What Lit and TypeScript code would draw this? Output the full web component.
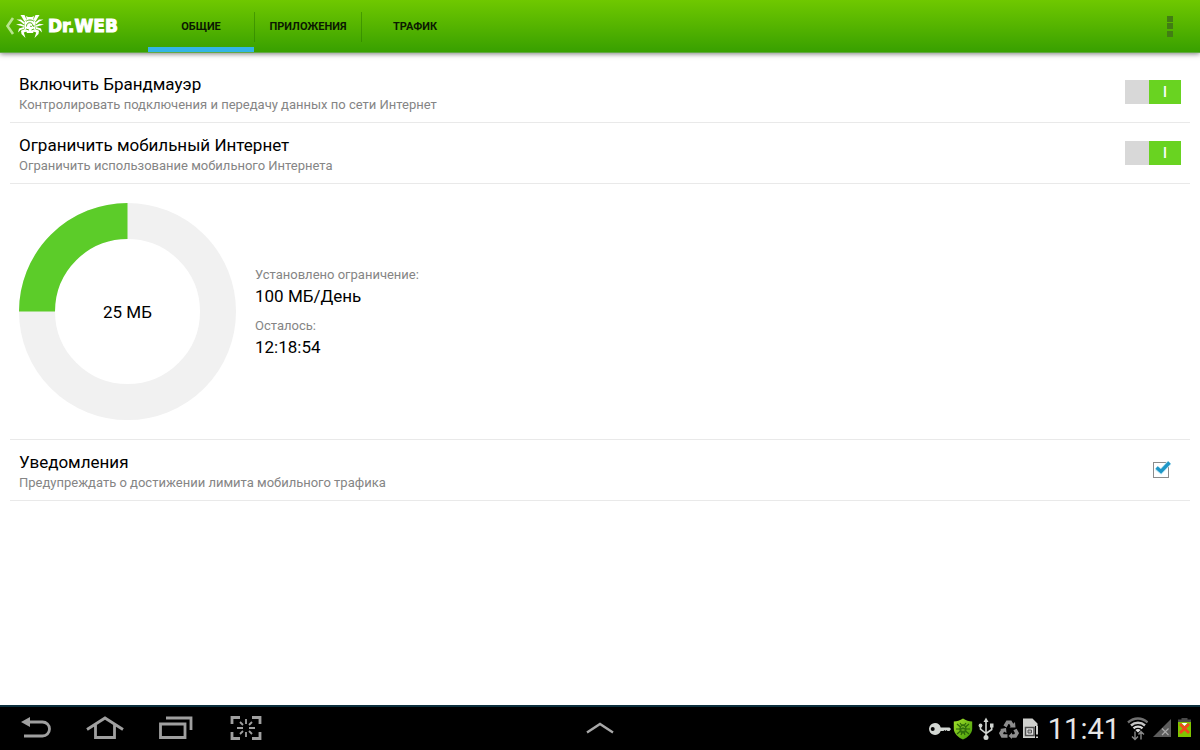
import { LitElement, html, css, svg, nothing } from "lit";
import { customElement, property, state } from "lit/decorators.js";
import { classMap } from "lit/directives/class-map.js";

const TABS = ["ОБЩИЕ", "ПРИЛОЖЕНИЯ", "ТРАФИК"];

@customElement("app-header")
class AppHeader extends LitElement {
  @state() private active = 0;

  static styles = css`
    :host {
      display: block;
      position: relative;
    }
    .bar {
      box-sizing: border-box;
      height: 53px;
      display: flex;
      align-items: stretch;
      background: linear-gradient(#6fc800, #55b400 50%, #38a000);
      border-bottom: 1px solid #63a844;
      box-shadow: 0 1px 5px rgba(0, 0, 0, 0.5);
    }
    button {
      appearance: none;
      border: 0;
      margin: 0;
      padding: 0;
      background: none;
      font-family: inherit;
      cursor: pointer;
    }
    .home {
      box-sizing: border-box;
      display: flex;
      align-items: center;
      width: 148px;
      padding-left: 5px;
      color: #fff;
      text-decoration: none;
    }
    .home svg {
      flex: none;
    }
    .brand {
      margin-left: 4px;
      font: bold 17px/20px "DejaVu Sans", sans-serif;
      -webkit-text-stroke: 1px #fff;
    }
    .tabs {
      display: flex;
      flex: 1;
    }
    .tab {
      display: flex;
      width: 107px;
      align-items: center;
      border-bottom: 5px solid transparent;
      padding-top: 6px;
      font-size: 11px;
      font-weight: 700;
      color: #0b1a00;
    }
    .tab.active {
      background: linear-gradient(#33b5e5, #33b5e5) left bottom / 106px 5px no-repeat;
      background-origin: border-box;
    }
    .tab span {
      flex: 1;
      line-height: 30px;
      border-right: 1px solid rgba(40, 120, 0, 0.5);
    }
    .tab:last-child span {
      border-right-color: transparent;
    }
    .more {
      width: 60px;
      display: grid;
      place-items: center;
    }
  `;

  render() {
    return html`
      <header class="bar">
        <a class="home" href="#home" aria-label="Dr.WEB">
          <svg width="11" height="26" viewBox="0 0 11 26" aria-hidden="true">
            <path d="M8 5 L2.5 13 L8 21" fill="none" stroke="#b9e58f" stroke-width="2.6" />
          </svg>
          <svg width="28" height="26" viewBox="0 0 28 26" aria-hidden="true">
            <g fill="#fff">
              <path d="M4.500 2 H8.500 L10.500 6.500 L8.500 8.500 Z" />
              <path d="M0.500 6.500 L5 6.500 L8.700 9.500 L8 11.500 L4.500 8.500 Z" />
              <path d="M0 11.500 L4.500 10.800 L8.500 12.500 V14 L4.500 12.800 Z" />
              <path d="M2 19.500 L3 15.500 L8 14 L8.500 15.800 L4.500 17 Z" />
              <path d="M5 17.800 L9 16 L10.500 18.500 L7.800 19.500 L9.500 25 L5.500 21 Z" />
              <path d="M23.500 2 H19.500 L17.500 6.500 L19.500 8.500 Z" />
              <path d="M27.500 6.500 L23 6.500 L19.300 9.500 L20 11.500 L23.500 8.500 Z" />
              <path d="M28 11.500 L23.500 10.800 L19.500 12.500 V14 L23.500 12.800 Z" />
              <path d="M26 19.500 L25 15.500 L20 14 L19.500 15.800 L23.500 17 Z" />
              <path d="M23 17.800 L19 16 L17.500 18.500 L20.200 19.500 L18.500 25 L22.500 21 Z" />
              <path d="M10 3 L12 4 H16 L18 3 L17.300 6 L19.500 9 V15 L17 20 H11 L8.500 15 V9 L10.700 6 Z" />
            </g>
            <path d="M10 8.500 C11.500 6.500 16.500 6.500 18 8.500 M10.500 13.500 C10.500 9.500 14 9 16 10.500 C17.500 12 16 14.500 14 13 M10 16 L13 17 M18 16 L15.500 17 M17.800 12 V14" fill="none" stroke="#50af05" stroke-width="1" />
          </svg>
          <span class="brand">Dr.WEB</span>
        </a>
        <div class="tabs" role="tablist">
          ${TABS.map(
            (t, i) => html`<button
              role="tab"
              aria-selected=${i === this.active}
              class=${classMap({ tab: true, active: i === this.active })}
              @click=${() => (this.active = i)}
            ><span>${t}</span></button>`
          )}
        </div>
        <button class="more" aria-label="Меню">
          <svg width="6" height="21" viewBox="0 0 6 21" fill="#427d14" aria-hidden="true">
            <rect width="6" height="6" />
            <rect y="7" width="6" height="6" />
            <rect y="15" width="6" height="6" />
          </svg>
        </button>
      </header>
    `;
  }
}

@customElement("setting-row")
class SettingRow extends LitElement {
  @property() heading = "";
  @property() summary = "";
  @property() kind: "switch" | "check" = "switch";
  @property({ type: Boolean }) checked = false;

  static styles = css`
    :host {
      display: block;
      border-bottom: 1px solid #e9e9e9;
    }
    .row {
      display: flex;
      align-items: center;
      justify-content: space-between;
      padding: 12px 9px 7px;
      cursor: pointer;
    }
    .heading,
    .summary {
      display: block;
    }
    .heading {
      font-size: 17px;
      line-height: 20px;
      color: #000;
    }
    .summary {
      font-size: 13px;
      line-height: 21px;
      color: #858585;
    }
    .control {
      display: grid;
      margin-top: -4px;
    }
    .control > * {
      grid-area: 1 / 1;
    }
    input {
      appearance: none;
      margin: 0;
    }
    .toggle {
      width: 56px;
      height: 24px;
      background: linear-gradient(90deg, #a8a8a8 32px, #d8d8d8 32px);
    }
    .toggle:checked {
      background: linear-gradient(90deg, #d8d8d8 24px, #69d321 24px);
    }
    .mark {
      width: 32px;
      justify-self: end;
      text-align: center;
      font-size: 14px;
      line-height: 25px;
      font-weight: 500;
      color: #fff;
      pointer-events: none;
    }
    .check {
      margin: -8px 9px 0 0;
    }
    .box {
      width: 16px;
      height: 16px;
      align-self: end;
      border: 1px solid #8c8c8c;
      background: #fff;
    }
    .tick {
      pointer-events: none;
    }
  `;

  private onChange(e: Event) {
    this.checked = (e.target as HTMLInputElement).checked;
  }

  render() {
    return html`
      <label class="row" for="control">
        <span>
          <span class="heading">${this.heading}</span>
          <span class="summary">${this.summary}</span>
        </span>
        ${this.kind === "switch"
          ? html`<span class="control">
              <input id="control" class="toggle" type="checkbox" role="switch" .checked=${this.checked} @change=${this.onChange} />
              ${this.checked ? html`<span class="mark" aria-hidden="true">I</span>` : nothing}
            </span>`
          : html`<span class="control check">
              <input id="control" class="box" type="checkbox" .checked=${this.checked} @change=${this.onChange} />
              ${this.checked
                ? html`<svg class="tick" width="19" height="18" viewBox="0 0 19 18" aria-hidden="true">
                    <path d="M3.500 8 L8 11.500 L16.500 2.500" fill="none" stroke="#c9ebf7" stroke-width="5" />
                    <path d="M3.500 7.500 L8 11.500 L16.500 2.500" fill="none" stroke="#1f97c7" stroke-width="3.400" />
                  </svg>`
                : nothing}
            </span>`}
      </label>
    `;
  }
}

@customElement("traffic-usage")
class TrafficUsage extends LitElement {
  @property({ type: Number }) used = 25;
  @property({ type: Number }) limit = 100;
  @property() left = "";

  static styles = css`
    :host {
      display: flex;
      align-items: center;
      gap: 19px;
      padding: 19px 9px;
      border-bottom: 1px solid #e9e9e9;
    }
    .chart {
      display: grid;
      place-items: center;
    }
    .chart > * {
      grid-area: 1 / 1;
    }
    .amount {
      font-size: 17px;
      line-height: 20px;
    }
    dl {
      margin: 0;
      padding-bottom: 1px;
      display: grid;
      gap: 9px;
    }
    dt {
      font-size: 13px;
      line-height: 20px;
      color: #858585;
    }
    dd {
      margin: 0;
      font-size: 17px;
      line-height: 22px;
      color: #000;
    }
  `;

  render() {
    const share = (this.used / this.limit) * 100;
    return html`
      <div class="chart">
        <svg width="217" height="217" viewBox="0 0 217 217" fill="none" stroke-width="36" aria-hidden="true">
          <circle cx="108.5" cy="108.5" r="90.5" stroke="#f1f1f1" />
          <circle cx="108.5" cy="108.5" r="90.5" stroke="#5ccc29" pathLength="100"
            stroke-dasharray="${share} 100" transform="rotate(180 108.5 108.5)" />
        </svg>
        <span class="amount">${this.used} МБ</span>
      </div>
      <dl>
        <div>
          <dt>Установлено ограничение:</dt>
          <dd>${this.limit} МБ/День</dd>
        </div>
        <div>
          <dt>Осталось:</dt>
          <dd>${this.left}</dd>
        </div>
      </dl>
    `;
  }
}

const NAV = [
  {
    label: "Назад",
    width: 30,
    art: svg`<path d="M8 6 H21.500 A7 7 0 0 1 21.500 20 H3" fill="none" stroke="#a0a0a0" stroke-width="2.8"/><path d="M0 6 L9 1 V11 Z" fill="#a0a0a0"/>`,
  },
  {
    label: "Домой",
    width: 38,
    art: svg`<path d="M1 13.500 L19 2 L37 13.500 M9.500 9 V21.500 H28.500 V9" fill="none" stroke="#a0a0a0" stroke-width="2.8"/>`,
  },
  {
    label: "Последние",
    width: 36,
    art: svg`<path d="M7 2 H32 V14 M1.500 8 H26 V21.500 H1.500 Z" fill="none" stroke="#a0a0a0" stroke-width="2.8"/>`,
  },
  {
    label: "Снимок экрана",
    width: 32,
    art: svg`<g fill="none" stroke="#a0a0a0"><path d="M10 1.500 H2 V8 M22 1.500 H30 V8 M2 16 V22.500 H10 M30 16 V22.500 H22" stroke-width="2.8"/><path d="M16 3 V8 M16 16 V21 M7 12 H13 M19 12 H25 M10 6 L13 9 M22 6 L19 9 M10 18 L13 15 M22 18 L19 15" stroke-width="1.800"/></g>`,
  },
];

@customElement("system-bar")
class SystemBar extends LitElement {
  static styles = css`
    :host {
      box-sizing: border-box;
      height: 45px;
      display: grid;
      grid-template-columns: 1fr auto 1fr;
      align-items: center;
      background: #000;
      border-top: 2px solid #0b2f3d;
    }
    button {
      appearance: none;
      border: 0;
      padding: 0 0 2px;
      background: none;
      display: block;
      cursor: pointer;
    }
    svg {
      display: block;
      flex: none;
    }
    .keys {
      display: flex;
      align-items: center;
      gap: 35px;
      padding-left: 21px;
    }
    .status {
      display: flex;
      align-items: center;
      justify-content: flex-end;
      gap: 5px;
      padding-right: 8px;
    }
    .icons {
      display: flex;
      align-items: center;
      gap: 2px;
    }
    .clock {
      padding: 0 1px 0 2px;
      font-size: 29px;
      line-height: 36px;
      color: #e6e6e6;
    }
  `;

  render() {
    return html`
      <nav class="keys" aria-label="Навигация">
        ${NAV.map(
          (n) => html`<button aria-label=${n.label}>
            <svg width=${n.width} height="24" viewBox="0 0 ${n.width} 24" aria-hidden="true">${n.art}</svg>
          </button>`
        )}
      </nav>
      <button aria-label="Панель приложений">
        <svg width="28" height="12" viewBox="0 0 28 12" aria-hidden="true">
          <path d="M1 10.500 L14 2 L27 10.500" fill="none" stroke="#a8a8a8" stroke-width="2.4" />
        </svg>
      </button>
      <div class="status">
        <div class="icons">
          <svg width="22" height="24" viewBox="0 0 22 24" aria-hidden="true">
            <path fill-rule="evenodd" fill="#d2d6d2" d="M6 6 A6 6 0 0 1 11.700 10.500 H20.500 L22 12 L20.500 14 H18.500 L17.500 13 L16.500 14 L15.500 13 L14.500 14 H11.700 A6 6 0 1 1 6 6 Z M3.700 10 A2 2 0 1 0 3.700 14 A2 2 0 1 0 3.700 10 Z" />
          </svg>
          <svg width="20" height="24" viewBox="0 0 20 24" aria-hidden="true">
            <defs>
              <linearGradient id="shield" x1="0" y1="0" x2="1" y2="1">
                <stop offset="0" stop-color="#a5e22b" />
                <stop offset="1" stop-color="#3f9708" />
              </linearGradient>
            </defs>
            <path d="M10 1.500 C13 3.500 16 4.500 19.200 4.500 V12 C19 17 14 21 10 22.500 C6 21 1 17 0.800 12 V4.500 C4 4.500 7 3.500 10 1.500 Z" fill="url(#shield)" />
            <path d="M7 6 L8.500 8 H11.500 L13 6 M4 7 L7.500 10 M16 7 L12.500 10 M3 12 H7 M17 12 H13 M4 17 L7.500 14 M16 17 L12.500 14 M8 18 L9 15.500 M12 18 L11 15.500" stroke="#2c6409" stroke-width="1.200" fill="none" />
            <ellipse cx="10" cy="12" rx="3.600" ry="4.600" fill="#2f700a" />
            <path d="M8 10.500 C9 9.500 11 9.500 12 10.500 M8.500 13 H11.500" stroke="#8fce2c" stroke-width="1" fill="none" />
          </svg>
          <svg width="22" height="24" viewBox="-1 0 22 24" aria-hidden="true">
            <g fill="#d0d4d0" stroke="none">
              <path d="M10 0.500 L12.500 5 H7.500 Z" />
              <circle cx="10" cy="20.500" r="2.500" />
              <circle cx="4.500" cy="8.500" r="1.900" />
              <path d="M14 6.500 H17.500 V10.500 H14 Z" />
            </g>
            <path d="M10 4 V20 M4.500 9 V12 L10 16.500 M15.700 10 V12.500 L10 16.500" fill="none" stroke="#d0d4d0" stroke-width="1.600" />
          </svg>
          <svg width="20" height="24" viewBox="0 0 20 24" aria-hidden="true">
            <g fill="none" stroke="#8d8d8d" stroke-width="3.600">
              <path d="M6 9.500 L8.500 5.200 H11.300 L13.500 9" />
              <path d="M16 12.500 L18 16.200 L16.300 19 H12" />
              <path d="M8.500 19 H3.500 L2 16.200 L4 13" />
            </g>
            <g fill="#8d8d8d">
              <path d="M10.500 10.500 L16.500 10.500 L16 5 Z" />
              <path d="M13 15.500 V22 L9.500 19 Z" />
              <path d="M1 12 L7 11 L7.500 16 Z" />
            </g>
          </svg>
          <svg width="20" height="24" viewBox="0 0 20 24" aria-hidden="true">
            <path d="M2 1.500 H11.500 L16.500 6.500 V10 H2 Z M2 9 H14 V21 H2 Z" fill="#cfd0cd" />
            <path d="M4.500 10.500 H13 V18.500 H4.500 Z" fill="#ddd" stroke="#4d4d4d" stroke-width="1.500" />
            <path d="M7 13 H10.500 V16 H7 Z" fill="#b5b5b5" stroke="#555" />
            <path d="M14 9 H18 V22 H14 Z" fill="#000" />
            <path d="M15 9 H17 V17.500 H15 Z M15 19.500 H17 V21 H15 Z" fill="#cfd0cd" />
          </svg>
        </div>
        <time class="clock">11:41</time>
        <svg width="22" height="26" viewBox="-1 0 22 26" aria-hidden="true">
          <g fill="none" stroke-width="2.400">
            <path d="M1 6.500 C7 1.200 15 1.200 20.500 6.500" stroke="#707070" />
            <path d="M4 9.500 C8 5.800 14 5.800 18 9.500" stroke="#c5c5c5" />
            <path d="M6.500 12.300 C9 10 13 10 15.500 12.300" stroke="#d8d8d8" />
          </g>
          <path d="M8.300 14 C10 12.700 12 12.700 13.700 14 L11 16.500 Z" fill="#e3e3e3" />
          <path d="M8 15.500 V23 M5 20.500 L8 23.500 L11 20.500 M14 23.500 V16 M11.500 18.500 L14 15.500 L17 18.500" fill="none" stroke="#888" stroke-width="1.400" />
        </svg>
        <svg width="18" height="24" viewBox="0 0 18 24" aria-hidden="true">
          <path d="M18 2 V20 H0 Z" fill="#5c5c5c" />
          <path d="M9 11.500 L15.500 18 M15.500 11.500 L9 18" stroke="#aaa" stroke-width="1.200" />
        </svg>
        <svg width="16" height="24" viewBox="0 0 16 24" aria-hidden="true">
          <path d="M5.500 1 H11.500 V2.500 H15 V5 H2 V2.500 H5.500 Z" fill="#4a4a4a" />
          <path d="M2 5 H15 V20 H2 Z" fill="#7fc400" />
          <path d="M5.500 6 H11.500 L8.500 9 Z" fill="#fff" />
          <path d="M4 7 L13 16 M13 7 L4 16" stroke="#f0481c" stroke-width="2.800" />
        </svg>
      </div>
    `;
  }
}

@customElement("app-root")
class AppRoot extends LitElement {
  static styles = css`
    :host {
      display: flex;
      flex-direction: column;
      min-height: 100vh;
      background: #fff;
      color: #000;
      font-family: Roboto, "Noto Sans", sans-serif;
    }
    main {
      flex: 1;
      padding: 9px 10px 0;
    }
  `;

  render() {
    return html`
      <app-header></app-header>
      <main>
        <setting-row heading="Включить Брандмауэр" summary="Контролировать подключения и передачу данных по сети Интернет" checked></setting-row>
        <setting-row heading="Ограничить мобильный Интернет" summary="Ограничить использование мобильного Интернета" checked></setting-row>
        <traffic-usage .used=${25} .limit=${100} left="12:18:54"></traffic-usage>
        <setting-row kind="check" heading="Уведомления" summary="Предупреждать о достижении лимита мобильного трафика" checked></setting-row>
      </main>
      <system-bar></system-bar>
    `;
  }
}
